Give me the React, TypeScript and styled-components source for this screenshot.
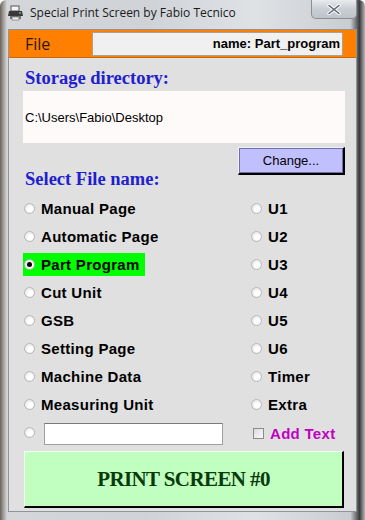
import React from 'react';
import styled, { createGlobalStyle } from 'styled-components';

const GlobalStyle = createGlobalStyle`
  html, body {
    margin: 0;
    padding: 0;
    width: 365px;
    height: 520px;
    overflow: hidden;
  }
  body {
    font-family: "Liberation Sans", Arial, sans-serif;
  }
`;

const Window = styled.div`
  width: 365px;
  height: 520px;
  box-sizing: border-box;
  display: flex;
  flex-direction: column;
  padding: 0 8px 8px 8px;
  background: linear-gradient(90deg, #6b625a 0px, #a9a7a4 4px, #d4d6d9 7px, #cfd3d7 40%, #dfe2e5 70%, #c9cdd1 96%, #3b3b3b 98.5%, #b5b8bb 100%);
  border-radius: 6px 6px 0 0;
`;

const TitleBar = styled.div`
  height: 29px;
  display: flex;
  align-items: center;
  gap: 6px;
  position: relative;
  font-family: "Open Sans", "Noto Sans", sans-serif;
  font-size: 12px;
  color: #1a1a1a;
  padding-bottom: 4px;
  box-sizing: border-box;
`;

const AppIcon = styled.svg`
  width: 16px;
  height: 16px;
  flex: none;
`;

const CloseButton = styled.div`
  position: absolute;
  right: 0;
  top: 0;
  width: 46px;
  height: 19px;
  border: 1px solid #8a8f96;
  border-top: none;
  border-radius: 0 0 5px 5px;
  background: linear-gradient(#e9ebee, #c9ced4 50%, #bfc4ca);
  box-sizing: border-box;
  display: flex;
  align-items: center;
  justify-content: center;
`;

const Client = styled.div`
  flex: 1;
  background: #e0e0e0;
  display: flex;
  flex-direction: column;
  border: 1px solid #8e949a;
`;

const MenuBar = styled.div`
  height: 28px;
  background: #ff8000;
  display: flex;
  align-items: center;
  padding: 0 13px 0 16px;
  box-sizing: border-box;
  border-bottom: 1px solid #c86a10;
`;

const MenuItem = styled.span`
  font-family: "Open Sans", "Noto Sans", sans-serif;
  font-size: 16px;
  color: #2a1400;
  width: 67px;
`;

const NameBox = styled.div`
  flex: 1;
  height: 24px;
  background: #f0f0f0;
  border: 1px solid #b0a090;
  box-sizing: border-box;
  display: flex;
  align-items: center;
  justify-content: flex-end;
  padding-right: 2px;
  font-weight: bold;
  font-size: 13px;
  color: #000;
`;

const Body = styled.div`
  flex: 1;
  display: flex;
  flex-direction: column;
  padding: 10px 11px 0 14px;
`;

const Heading = styled.div`
  font-family: "Liberation Serif", "Times New Roman", serif;
  font-weight: bold;
  font-size: 18.5px;
  color: #2020d0;
  padding-left: 2px;
  line-height: 20px;
`;

const DirBox = styled.div`
  margin-top: 3px;
  height: 52px;
  background: #fffafa;
  display: flex;
  align-items: center;
  padding-left: 2px;
  font-size: 13px;
  color: #000;
`;

const ChangeRow = styled.div`
  display: flex;
  justify-content: flex-end;
  margin-top: 4px;
`;

const ChangeButton = styled.button`
  width: 107px;
  height: 28px;
  background: #c0c0ff;
  border: 1px solid #000;
  border-right-width: 2px;
  border-bottom-width: 2px;
  border-top-color: #f0f0ff;
  border-left-color: #f0f0ff;
  box-shadow: inset 0 0 0 1px #7070a0;
  font-family: "Liberation Sans", Arial, sans-serif;
  font-size: 13px;
  color: #000;
  padding: 0;
`;

const SelectHeading = styled(Heading)`
  margin-top: -6px;
`;

const Options = styled.div`
  display: grid;
  grid-template-columns: 227px 1fr;
  grid-auto-rows: 28px;
  margin-top: 5px;
`;

const Option = styled.div<{ $selected?: boolean }>`
  display: flex;
  align-items: center;
  align-self: center;
  justify-self: start;
  gap: 6px;
  height: 23px;
  padding: 0 5px 0 1px;
  background: ${(p) => (p.$selected ? '#00ff00' : 'transparent')};
  font-weight: bold;
  font-size: 15px;
  letter-spacing: 0.3px;
  color: #000;
`;

const Radio = styled.span<{ $checked?: boolean }>`
  width: 11px;
  height: 11px;
  border-radius: 50%;
  box-sizing: border-box;
  border: 1px solid #b8b8b8;
  background: radial-gradient(circle at 60% 60%, #ffffff 30%, #e2e2e2 80%, #cfcfcf);
  display: flex;
  align-items: center;
  justify-content: center;
  flex: none;
  &::after {
    content: '';
    width: 5px;
    height: 5px;
    border-radius: 50%;
    background: ${(p) => (p.$checked ? '#000' : 'transparent')};
  }
`;

const TextInput = styled.input`
  width: 179px;
  height: 22px;
  box-sizing: border-box;
  border: 1px solid #a0a0a0;
  border-top-color: #7a7a7a;
  background: #fff;
  margin: 4px 0 0 3px;
`;

const Check = styled.span`
  width: 11px;
  height: 11px;
  box-sizing: border-box;
  border: 1px solid #8a8a8a;
  background: linear-gradient(135deg, #dcdcdc, #fafafa);
  flex: none;
  margin: 2px 0 0 2px;
`;

const AddText = styled.span`
  color: #c000c0;
  font-weight: bold;
  font-size: 15px;
  letter-spacing: 0.3px;
  margin-top: 2px;
`;

const PrintButton = styled.button`
  margin-top: 5px;
  margin-left: 1px;
  height: 57px;
  width: 320px;
  background: #c0ffc0;
  border: 1px solid #f4fff4;
  border-right: 2px solid #000;
  border-bottom: 2px solid #000;
  font-family: "Liberation Serif", "Times New Roman", serif;
  font-weight: bold;
  font-size: 21px;
  letter-spacing: -0.6px;
  color: #0a3a0a;
  padding: 0;
`;

const left = ['Manual Page', 'Automatic Page', 'Part Program', 'Cut Unit', 'GSB', 'Setting Page', 'Machine Data', 'Measuring Unit'];
const right = ['U1', 'U2', 'U3', 'U4', 'U5', 'U6', 'Timer', 'Extra'];

export default function App() {
  const selected = 'Part Program';
  return (
    <>
      <GlobalStyle />
      <Window>
        <TitleBar>
          <AppIcon viewBox="0 0 16 16">
            <rect x="3" y="1" width="8" height="5" fill="#f4f4f4" stroke="#555" strokeWidth="1" />
            <path d="M1 6h13l1 5H0z" fill="#3a3a3a" />
            <rect x="2" y="11" width="11" height="3" fill="#777" />
            <rect x="4" y="12" width="7" height="3" fill="#eee" stroke="#666" strokeWidth="0.6" />
            <circle cx="12" cy="8" r="0.8" fill="#9f9" />
          </AppIcon>
          Special Print Screen by Fabio Tecnico
          <CloseButton>
            <svg width="14" height="11" viewBox="0 0 14 11">
              <path d="M2 1.5l10 8M12 1.5l-10 8" stroke="#fff" strokeWidth="3.4" strokeLinecap="round" />
              <path d="M2 1.5l10 8M12 1.5l-10 8" stroke="#5d6670" strokeWidth="1.6" strokeLinecap="round" />
            </svg>
          </CloseButton>
        </TitleBar>
        <Client>
          <MenuBar>
            <MenuItem>File</MenuItem>
            <NameBox>name: Part_program</NameBox>
          </MenuBar>
          <Body>
            <Heading>Storage directory:</Heading>
            <DirBox>C:\Users\Fabio\Desktop</DirBox>
            <ChangeRow>
              <ChangeButton>Change...</ChangeButton>
            </ChangeRow>
            <SelectHeading>Select File name:</SelectHeading>
            <Options>
              {left.map((l, i) => (
                <React.Fragment key={l}>
                  <Option $selected={l === selected}>
                    <Radio $checked={l === selected} />
                    {l}
                  </Option>
                  <Option>
                    <Radio />
                    {right[i]}
                  </Option>
                </React.Fragment>
              ))}
              <Option>
                <Radio />
                <TextInput />
              </Option>
              <Option>
                <Check />
                <AddText>Add Text</AddText>
              </Option>
            </Options>
            <PrintButton>PRINT SCREEN #0</PrintButton>
          </Body>
        </Client>
      </Window>
    </>
  );
}
